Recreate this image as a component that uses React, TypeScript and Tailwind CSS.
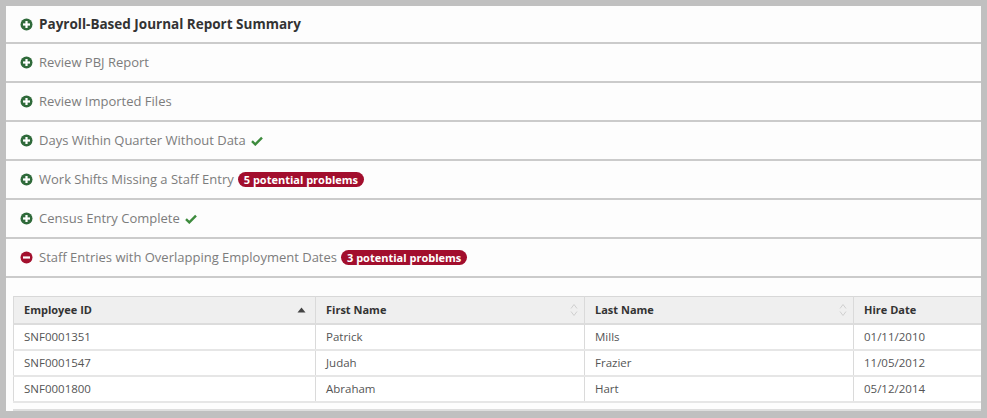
import React from "react";

const sections = [
  { title: "Payroll-Based Journal Report Summary", bold: true },
  { title: "Review PBJ Report" },
  { title: "Review Imported Files" },
  { title: "Days Within Quarter Without Data", check: true },
  { title: "Work Shifts Missing a Staff Entry", problems: 5 },
  { title: "Census Entry Complete", check: true },
  { title: "Staff Entries with Overlapping Employment Dates", problems: 3, open: true },
];

const employees = [
  { id: "SNF0001351", first: "Patrick", last: "Mills", hired: "01/11/2010" },
  { id: "SNF0001547", first: "Judah", last: "Frazier", hired: "11/05/2012" },
  { id: "SNF0001800", first: "Abraham", last: "Hart", hired: "05/12/2014" },
];

function ToggleIcon({ open }: { open?: boolean }) {
  return (
    <svg width="13" height="13" viewBox="0 0 13 13" className="shrink-0">
      <circle cx="6.5" cy="6.5" r="6" fill={open ? "#a3102e" : "#2f6a3a"} />
      <rect x="3" y="5.4" width="7" height="2.2" fill="#fff" />
      {!open && <rect x="5.4" y="3" width="2.2" height="7" fill="#fff" />}
    </svg>
  );
}

function Check() {
  return (
    <svg width="12" height="10" viewBox="0 0 12 10" className="ml-[5px]">
      <path d="M1 5.2 L4.3 8.4 L11 1.6" stroke="#3d8b3d" strokeWidth="2.4" fill="none" />
    </svg>
  );
}

function SortBoth() {
  return (
    <svg width="8" height="14" viewBox="0 0 8 14">
      <path d="M1 5.5 L4 1.5 L7 5.5" stroke="#cfcfcf" strokeWidth="1" fill="none" />
      <path d="M1 8.5 L4 12.5 L7 8.5" stroke="#cfcfcf" strokeWidth="1" fill="none" />
    </svg>
  );
}

function SortUp() {
  return (
    <svg width="9" height="6" viewBox="0 0 9 6">
      <path d="M0.5 5.5 L4.5 0.5 L8.5 5.5 Z" fill="#444" />
    </svg>
  );
}

export default function App() {
  return (
    <div
      className="w-[987px] h-[418px] bg-[#c0c0c0] pt-[6px] pl-[6px] pr-[6px] pb-[7px] overflow-hidden"
      style={{ fontFamily: "'Open Sans', 'Noto Sans', sans-serif" }}
    >
      <div className="h-full bg-[#fdfdfd] flex flex-col overflow-hidden">
        {sections.map((s, i) => (
          <div
            key={s.title}
            className={
              (i === 0 ? "h-[38px] " : "h-[39px] ") +
              "shrink-0 border-b-2 border-[#cbcbcb] flex items-center pl-[14px]"
            }
          >
            <ToggleIcon open={s.open} />
            <span
              className={
                s.bold
                  ? "ml-[6px] text-[13.5px] font-bold text-[#333]"
                  : "ml-[6px] text-[13px] text-[#7c7c7c]"
              }
            >
              {s.title}
            </span>
            {s.check && <Check />}
            {s.problems && (
              <span className="ml-[4px] rounded-full bg-[#a20e2d] text-white text-[11px] font-bold leading-[15px] px-[6px]">
                {s.problems} potential problems
              </span>
            )}
          </div>
        ))}

        <div className="mt-[18px] ml-[7px] flex-1 overflow-hidden border-b-2 border-[#dedede]">
          <table className="border-collapse text-[11.5px] table-fixed w-[1100px]">
            <thead>
              <tr className="bg-[#efefef] h-[27px] border-t border-[#d8d8d8] border-b-2 border-b-[#dcdcdc]">
                <th className="w-[302px] border-l border-[#dadada] text-left font-bold text-[11px] text-[#333] pl-[10px] pr-[9px]">
                  <div className="flex items-center justify-between">
                    Employee ID <SortUp />
                  </div>
                </th>
                <th className="w-[269px] border-l border-[#dadada] text-left font-bold text-[11px] text-[#333] pl-[10px] pr-[6px]">
                  <div className="flex items-center justify-between">
                    First Name <SortBoth />
                  </div>
                </th>
                <th className="w-[269px] border-l border-[#dadada] text-left font-bold text-[11px] text-[#333] pl-[10px] pr-[6px]">
                  <div className="flex items-center justify-between">
                    Last Name <SortBoth />
                  </div>
                </th>
                <th className="w-[260px] border-l border-[#dadada] text-left font-bold text-[11px] text-[#333] pl-[10px]">
                  Hire Date
                </th>
              </tr>
            </thead>
            <tbody>
              {employees.map((e) => (
                <tr key={e.id} className="h-[26px] bg-white border-b-2 border-[#e6e6e6] text-[#555]">
                  <td className="border-l border-[#dadada] pl-[10px]">{e.id}</td>
                  <td className="border-l border-[#dadada] pl-[10px]">{e.first}</td>
                  <td className="border-l border-[#dadada] pl-[10px]">{e.last}</td>
                  <td className="border-l border-[#dadada] pl-[10px]">{e.hired}</td>
                </tr>
              ))}
            </tbody>
          </table>
        </div>
      </div>
    </div>
  );
}
